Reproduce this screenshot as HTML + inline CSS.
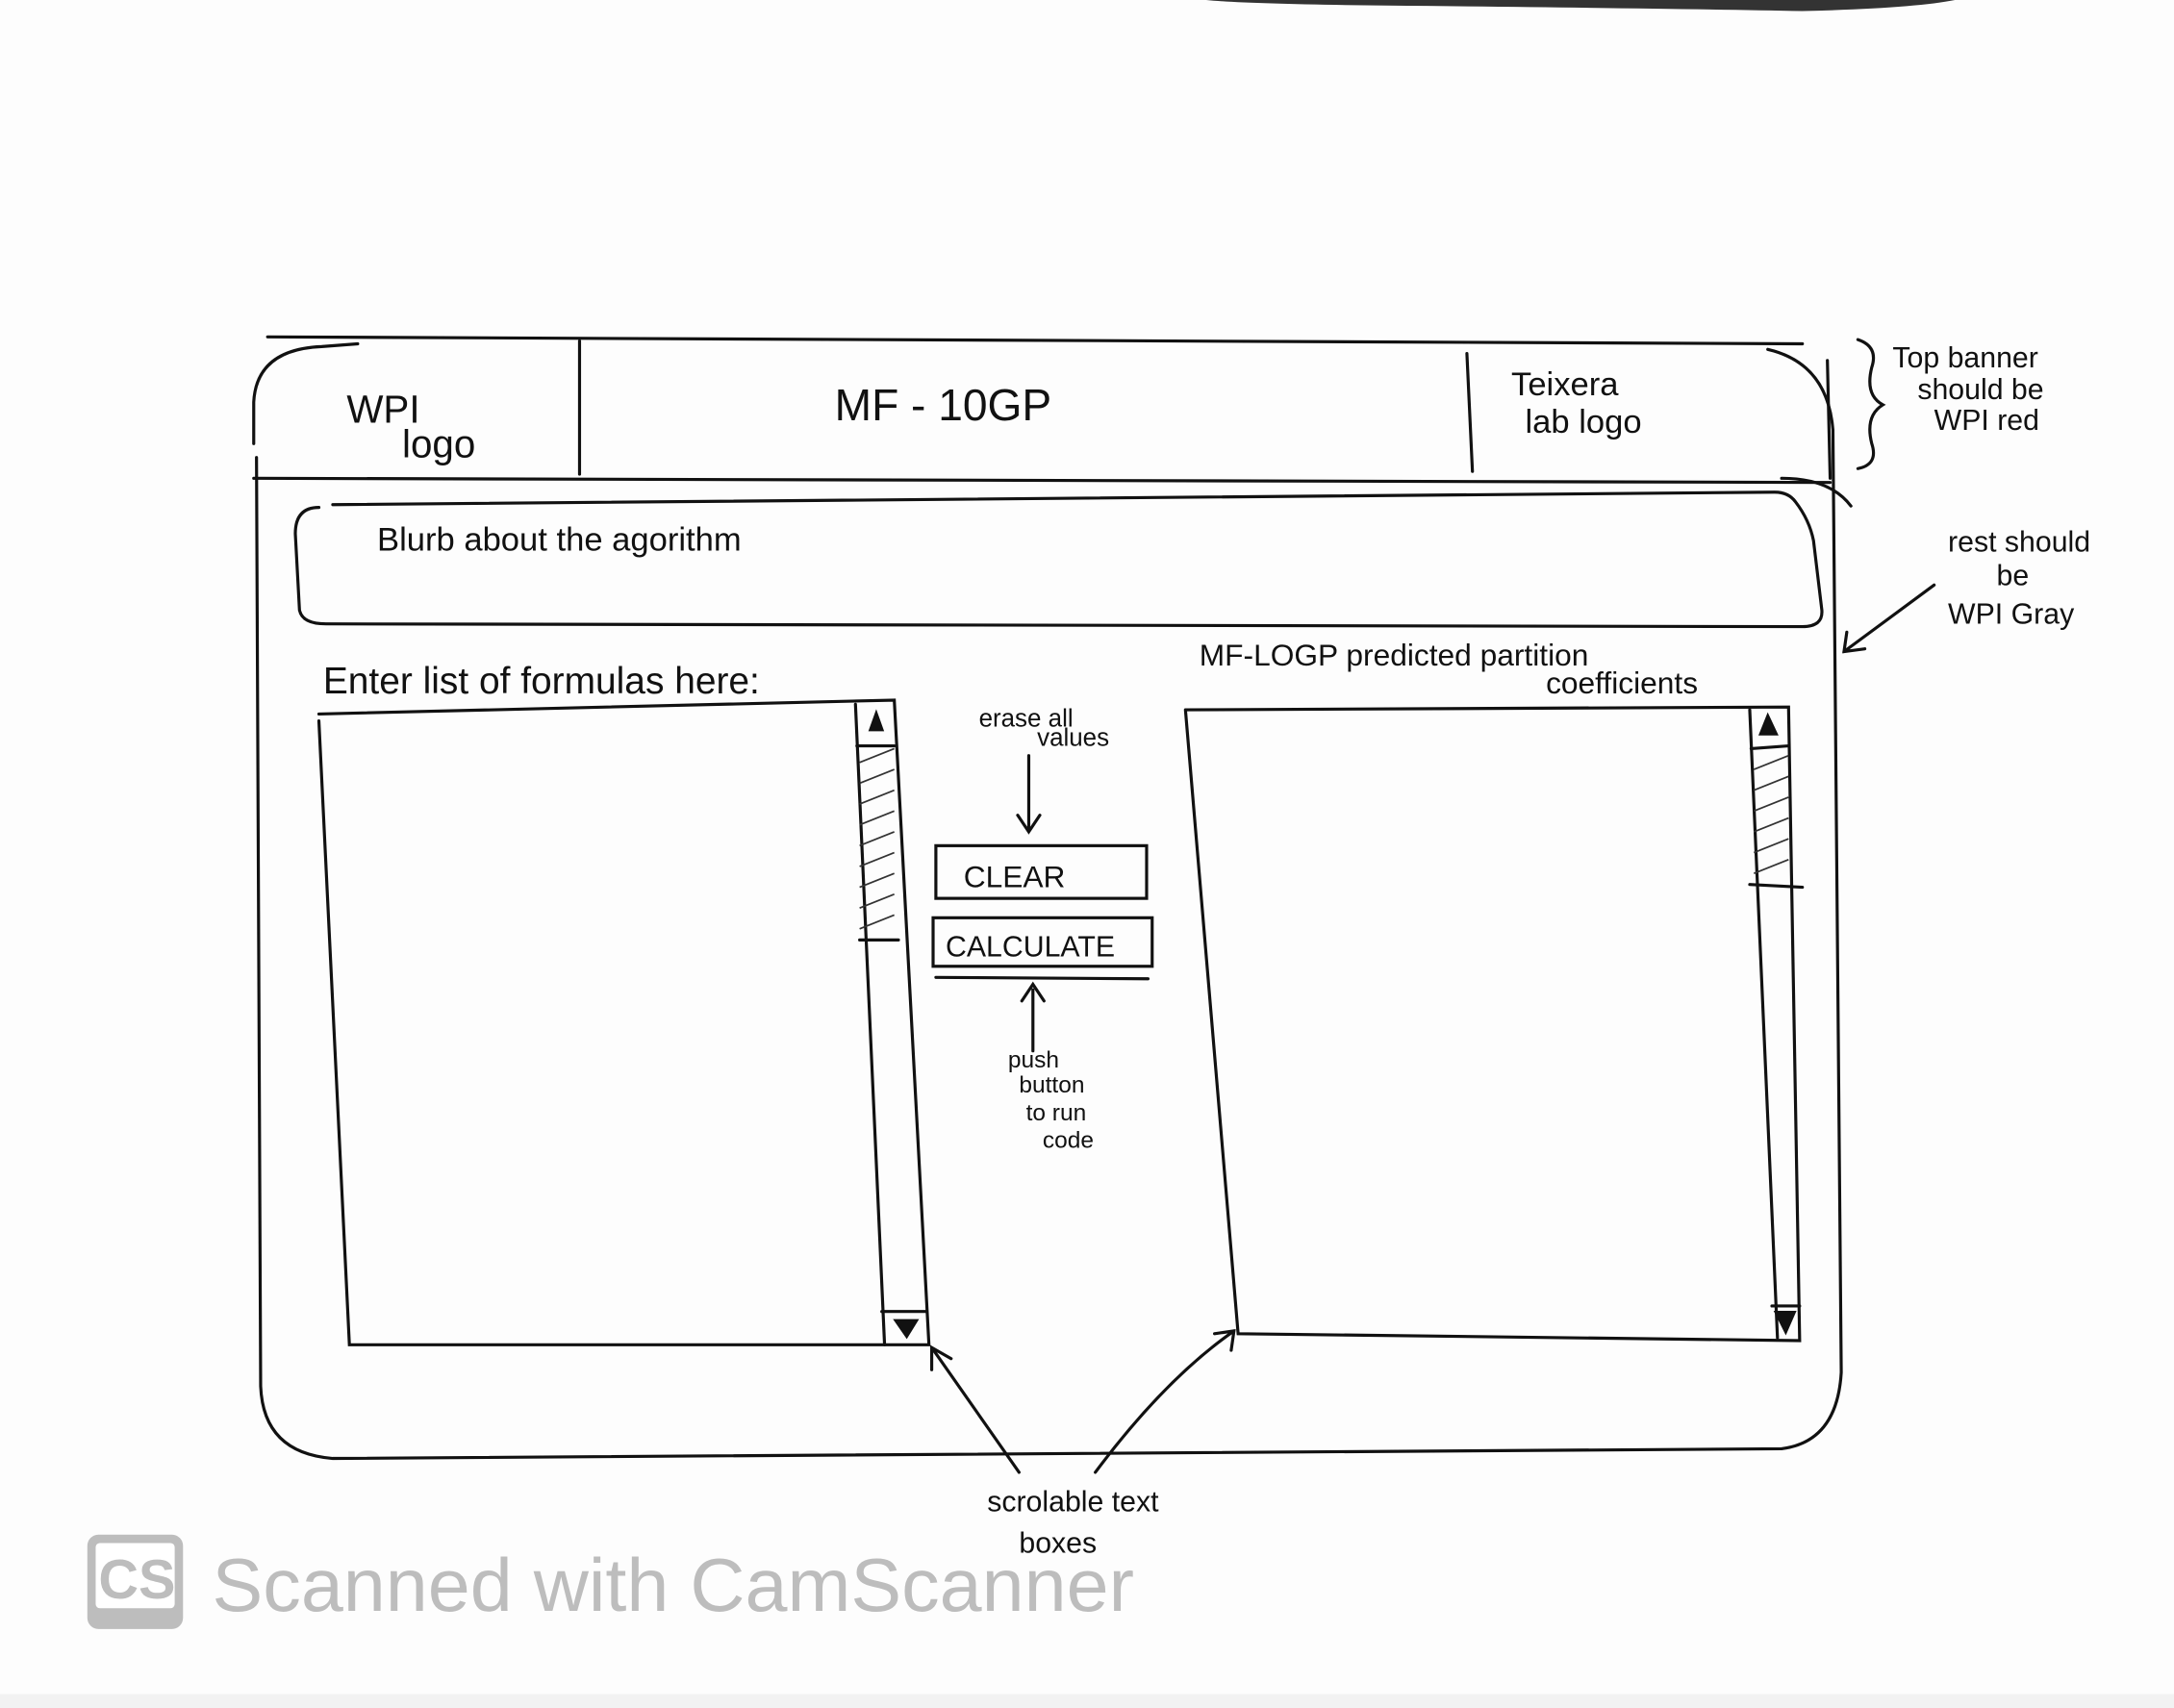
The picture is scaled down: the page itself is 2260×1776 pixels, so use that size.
<!DOCTYPE html>
<html><head><meta charset="utf-8"><style>
html,body{margin:0;padding:0;background:#fff;width:2260px;height:1776px;overflow:hidden}
svg{display:block}
text{font-family:"Liberation Sans",sans-serif;fill:#111}
</style></head><body>
<svg width="2260" height="1776" viewBox="0 0 1568 1232" preserveAspectRatio="none" xmlns="http://www.w3.org/2000/svg">
<rect width="1568" height="1232" fill="#fdfdfd"/>
<rect x="0" y="1222" width="1568" height="10" fill="#f2f2f2"/>
<path d="M870 0 L1410 0 Q1380 6 1300 8 Q1200 6 1000 4 Q900 3 870 0Z" fill="#333"/>
<g fill="none" stroke="#111" stroke-width="2.2" stroke-linecap="round">
<line x1="193" y1="243" x2="1300" y2="248"/>
<path d="M183 320 L183 290 Q185 252 232 250 L258 248"/>
<path d="M1275 252 Q1318 262 1322 310 L1328 990 Q1325 1040 1285 1045 L240 1052 Q190 1048 188 1000 L185 330"/>
<line x1="183" y1="345" x2="1320" y2="348"/>
<line x1="418" y1="246" x2="418" y2="342"/>
<line x1="1058" y1="255" x2="1062" y2="340"/>
<path d="M230 366 Q213 366 213 385 L216 440 Q218 450 235 450 L1300 452 Q1315 452 1314 440 L1308 390 Q1305 375 1295 362 Q1290 355 1280 355 L240 364"/>
<path d="M1285 345 Q1320 345 1335 365"/>
<path d="M230 520 L252 970 L670 970 L645 505 L230 515"/>
<line x1="617" y1="508" x2="638" y2="970"/>
<line x1="618" y1="538" x2="645" y2="538"/>
<line x1="620" y1="678" x2="648" y2="678"/>
<line x1="636" y1="946" x2="668" y2="946"/>
<path d="M855 512 L893 962 L1298 967 L1290 510 L855 512"/>
<line x1="1262" y1="512" x2="1282" y2="965"/>
<line x1="1263" y1="540" x2="1290" y2="538"/>
<line x1="1262" y1="638" x2="1300" y2="640"/>
<line x1="1278" y1="942" x2="1298" y2="942"/>
<rect x="675" y="610" width="152" height="38"/>
<rect x="673" y="662" width="158" height="35"/>
<line x1="675" y1="705" x2="828" y2="706"/>
<path d="M742 545 L742 598 M734 588 L742 600 L750 588"/>
<path d="M745 758 L745 714 M737 722 L745 710 L753 722"/>
<path d="M735 1062 L672 972 M672 988 L672 972 L686 980"/>
<path d="M790 1062 Q840 995 890 960 M876 962 L890 960 L888 974"/>
<path d="M1340 245 Q1355 250 1350 265 Q1345 285 1358 292 Q1345 300 1350 320 Q1355 335 1340 338"/>
<path d="M1395 422 L1330 470 M1332 456 L1330 470 L1345 468"/>
<line x1="1318" y1="260" x2="1320" y2="345"/>
</g>
<g fill="#111" stroke="#111" stroke-width="1">
<path d="M632 513 L627 527 L637 527Z"/>
<path d="M1275 515 L1269 530 L1282 530Z"/>
<path d="M645 952 L662 952 L654 965Z"/>
<path d="M1280 946 L1295 946 L1288 962Z"/>
</g>
<g stroke="#333" stroke-width="1.2">
<path d="M620 550 L645 540 M620 565 L645 555 M620 580 L645 570 M620 595 L645 585 M620 610 L645 600 M620 625 L645 615 M620 640 L645 630 M620 655 L645 645 M620 670 L645 660"/>
<path d="M1265 555 L1290 545 M1265 570 L1290 560 M1265 585 L1290 575 M1265 600 L1290 590 M1265 615 L1290 605 M1265 630 L1290 620"/>
</g>
<text x="250" y="305" font-size="28">WPI</text>
<text x="290" y="330" font-size="28">logo</text>
<text x="602" y="303" font-size="32">MF - 10GP</text>
<text x="1090" y="285" font-size="24">Teixera</text>
<text x="1100" y="312" font-size="24">lab logo</text>
<text x="272" y="397" font-size="24">Blurb  about  the  agorithm</text>
<text x="233" y="500" font-size="27">Enter list of formulas here:</text>
<text x="865" y="480" font-size="22">MF-LOGP  predicted  partition</text>
<text x="1115" y="500" font-size="22">coefficients</text>
<text x="695" y="640" font-size="22">CLEAR</text>
<text x="682" y="690" font-size="21">CALCULATE</text>
<text x="706" y="524" font-size="18">erase all</text>
<text x="748" y="538" font-size="18">values</text>
<text x="727" y="770" font-size="17">push</text>
<text x="735" y="788" font-size="17">button</text>
<text x="740" y="808" font-size="17">to run</text>
<text x="752" y="828" font-size="17">code</text>
<text x="712" y="1090" font-size="21">scrolable text</text>
<text x="735" y="1120" font-size="21">boxes</text>
<text x="1365" y="265" font-size="21">Top banner</text>
<text x="1383" y="288" font-size="21">should be</text>
<text x="1395" y="310" font-size="21">WPI red</text>
<text x="1405" y="398" font-size="21">rest should</text>
<text x="1440" y="422" font-size="21">be</text>
<text x="1405" y="450" font-size="21">WPI Gray</text>
<rect x="63" y="1107" width="69" height="68" rx="8" fill="#bdbdbd"/>
<rect x="69" y="1113" width="57" height="47" rx="3" fill="#fff"/>
<text x="71" y="1153" font-size="40" font-weight="bold" style="fill:#bdbdbd">CS</text>
<text x="153" y="1162" font-size="54" textLength="665" lengthAdjust="spacingAndGlyphs" style="fill:#bdbdbd">Scanned with CamScanner</text>
</svg>
</body></html>
